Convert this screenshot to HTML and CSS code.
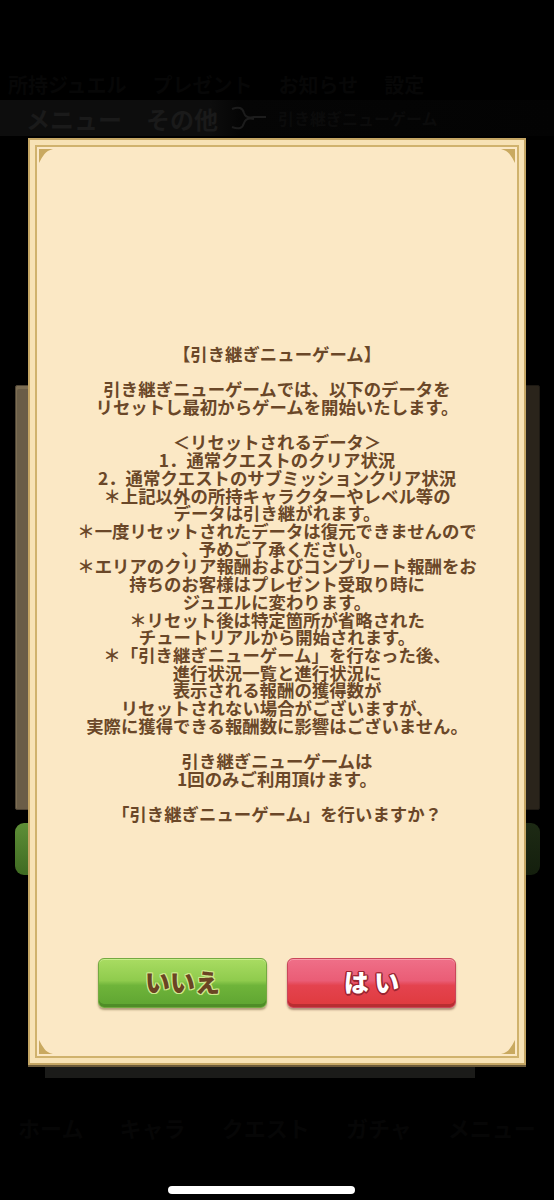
FILE: index.html
```html
<!DOCTYPE html>
<html lang="ja">
<head>
<meta charset="utf-8">
<title>引き継ぎニューゲーム</title>
<link rel="stylesheet" href="styles.css">
</head>
<body>
<div class="screen">
  <!-- dimmed game screen behind the modal -->
  <div class="backdrop">
    <div class="bg-row">
      <span>所持ジュエル</span><span>プレゼント</span><span>お知らせ</span><span>設定</span>
    </div>
    <div class="bg-header">
      <span class="bg-title">メニュー　その他</span>
      <svg class="bg-flourish" width="40" height="30" viewBox="0 0 40 30">
        <path d="M4 6 Q14 2 16 10 Q18 16 26 14 L38 14 M4 24 Q14 28 16 20 Q18 14 26 16" fill="none" stroke="#1c1c1c" stroke-width="2"/>
      </svg>
      <span class="bg-sub">引き継ぎニューゲーム</span>
    </div>
    <div class="bg-middle">
      <div class="bg-side"></div>
      <div class="bg-side bg-side-right"></div>
    </div>
    <div class="bg-buttons">
      <div class="bg-green"></div>
      <div class="bg-green bg-green-right"></div>
    </div>
    <div class="bg-band"></div>
    <div class="bg-lines">
      <span>ホーム</span><span>キャラ</span><span>クエスト</span><span>ガチャ</span><span>メニュー</span>
    </div>
    <div class="home-bar"></div>
  </div>

  <!-- confirmation modal -->
  <div class="dialog">
    <svg class="corner corner-tl" width="14" height="14" viewBox="0 0 14 14"><path d="M0 0 L14 0 Q8 1.5 5.5 5 Q3 8 0 14 Z" fill="#c9a960"/></svg>
    <svg class="corner corner-tr" width="14" height="14" viewBox="0 0 14 14"><path d="M0 0 L14 0 Q8 1.5 5.5 5 Q3 8 0 14 Z" fill="#c9a960"/></svg>
    <svg class="corner corner-bl" width="14" height="14" viewBox="0 0 14 14"><path d="M0 0 L14 0 Q8 1.5 5.5 5 Q3 8 0 14 Z" fill="#c9a960"/></svg>
    <svg class="corner corner-br" width="14" height="14" viewBox="0 0 14 14"><path d="M0 0 L14 0 Q8 1.5 5.5 5 Q3 8 0 14 Z" fill="#c9a960"/></svg>

    <div class="message">
      <p>【引き継ぎニューゲーム】</p>
      <p>引き継ぎニューゲームでは、以下のデータを<br>リセットし最初からゲームを開始いたします。</p>
      <p>＜リセットされるデータ＞<br>
        1．通常クエストのクリア状況<br>
        2．通常クエストのサブミッションクリア状況<br>
        ＊上記以外の所持キャラクターやレベル等の<br>
        データは引き継がれます。<br>
        ＊一度リセットされたデータは復元できませんので<br>
        、予めご了承ください。<br>
        ＊エリアのクリア報酬およびコンプリート報酬をお<br>
        持ちのお客様はプレゼント受取り時に<br>
        ジュエルに変わります。<br>
        ＊リセット後は特定箇所が省略された<br>
        チュートリアルから開始されます。<br>
        ＊「引き継ぎニューゲーム」を行なった後、<br>
        進行状況一覧と進行状況に<br>
        表示される報酬の獲得数が<br>
        リセットされない場合がございますが、<br>
        実際に獲得できる報酬数に影響はございません。</p>
      <p>引き継ぎニューゲームは<br>1回のみご利用頂けます。</p>
      <p>「引き継ぎニューゲーム」を行いますか？</p>
    </div>

    <div class="actions">
      <button class="btn btn-no" type="button">いいえ</button>
      <button class="btn btn-yes" type="button">は い</button>
    </div>
  </div>
</div>
</body>
</html>
```

FILE: styles.css
```css
* {
  box-sizing: border-box;
}

html,
body {
  margin: 0;
  padding: 0;
  background: #000;
}

.screen {
  position: relative;
  width: 554px;
  height: 1200px;
  overflow: hidden;
  background: #000;
  font-family: "Noto Sans CJK JP", "Noto Sans", sans-serif;
}

/* ---------- dimmed background screen ---------- */
.backdrop {
  display: flex;
  flex-direction: column;
  height: 1200px;
}

.bg-row {
  margin-top: 68px;
  height: 32px;
  display: flex;
  gap: 26px;
  padding-left: 8px;
  align-items: center;
  font-size: 20px;
  font-weight: 700;
  color: #070707;
  white-space: nowrap;
}

.bg-header {
  height: 36px;
  display: flex;
  align-items: center;
  padding-left: 26px;
  gap: 10px;
  background: linear-gradient(to right, #0d0d0d 0, #0d0d0d 210px, #050505 240px, #030303 100%);
  white-space: nowrap;
}

.bg-title {
  font-size: 24px;
  font-weight: 700;
  color: #1a1a1a;
}

.bg-flourish {
  flex: none;
}

.bg-sub {
  font-size: 16px;
  font-weight: 700;
  color: #0b0b0b;
}

.bg-middle {
  margin-top: 249px;
  height: 425px;
  display: flex;
  justify-content: space-between;
  padding: 0 14px 0 15px;
}

.bg-side {
  width: 20px;
  height: 100%;
  background: #6a5d47;
  border: 1px solid #4e4434;
  border-radius: 2px;
  box-shadow: inset 2px 4px 0 -1px #7c6d53, inset -1px 0 0 #5b503d;
}

.bg-side-right {
  background: #2a241b;
  border-color: #1d1913;
  box-shadow: none;
}

.bg-buttons {
  margin-top: 13px;
  height: 52px;
  display: flex;
  justify-content: space-between;
  padding: 0 14px 0 15px;
}

.bg-green {
  width: 20px;
  height: 100%;
  border-radius: 9px 0 0 9px;
  background: linear-gradient(#5e8f37, #3f6b22);
}

.bg-green-right {
  border-radius: 0 9px 9px 0;
  background: linear-gradient(#1d2a14, #141f0d);
}

.bg-band {
  margin: 191px 79px 0 45px;
  height: 12px;
  background: #1b1b19;
}

.bg-lines {
  margin-top: 14px;
  height: 70px;
  display: flex;
  justify-content: space-around;
  align-items: center;
  font-size: 22px;
  font-weight: 700;
  color: #060606;
}

.home-bar {
  margin: 24px 0 0 168px;
  width: 187px;
  height: 8px;
  border-radius: 4px;
  background: #fff;
}

/* ---------- modal ---------- */
.dialog {
  position: absolute;
  left: 28px;
  top: 138px;
  width: 498px;
  height: 927px;
  display: flex;
  flex-direction: column;
  align-items: center;
  background: #fbe8c5;
  border: 2px solid #c5a664;
  box-shadow:
    inset 0 0 0 5px #f7e2b5,
    inset 0 0 0 7px #d0b26d,
    0 2px 0 #6b5a3a;
}

.corner {
  position: absolute;
}

.corner-tl {
  left: 9px;
  top: 9px;
}

.corner-tr {
  right: 9px;
  top: 9px;
  transform: scaleX(-1);
}

.corner-bl {
  left: 9px;
  bottom: 9px;
  transform: scaleY(-1);
}

.corner-br {
  right: 9px;
  bottom: 9px;
  transform: scale(-1, -1);
}

.message {
  margin-top: 205px;
  width: 100%;
  text-align: center;
  font-size: 17.4px;
  line-height: 17.7px;
  font-weight: 700;
  color: #6a4728;
  white-space: nowrap;
}

.message p {
  margin: 0 0 17.7px;
}

.message p:last-child {
  margin-bottom: 0;
}

.actions {
  margin-top: 135px;
  display: flex;
  gap: 20px;
}

.btn {
  width: 169px;
  height: 50px;
  padding: 0 0 3px;
  border-radius: 6px;
  font-family: "Noto Sans CJK JP", "Noto Sans", sans-serif;
  font-size: 25px;
  font-weight: 900;
  line-height: 1;
  cursor: pointer;
}

.btn-no {
  border: 1px solid #74a941;
  background: linear-gradient(#a9dc62 0%, #8fcb4d 45%, #6fb43a 55%, #5ea431 100%);
  box-shadow:
    inset 0 1px 0 #c7ee8c,
    inset 0 -3px 0 #4f8d27,
    0 2px 2px rgba(90, 70, 30, 0.45);
  color: #6b4423;
  text-shadow:
    1px 0 0 #cfe98c, -1px 0 0 #cfe98c, 0 1px 0 #cfe98c, 0 -1px 0 #cfe98c,
    1px 1px 0 #cfe98c, -1px -1px 0 #cfe98c, 1px -1px 0 #cfe98c, -1px 1px 0 #cfe98c;
}

.btn-yes {
  border: 1px solid #c9465a;
  background: linear-gradient(#ef6f88 0%, #ea5d76 45%, #e4434f 55%, #df3a3d 100%);
  box-shadow:
    inset 0 1px 0 #f79bab,
    inset 0 -3px 0 #b82d31,
    0 2px 2px rgba(90, 40, 30, 0.45);
  color: #fff;
  text-shadow:
    1.5px 0 0 #9a2430, -1.5px 0 0 #9a2430, 0 1.5px 0 #9a2430, 0 -1.5px 0 #9a2430,
    1px 1px 0 #9a2430, -1px -1px 0 #9a2430, 1px -1px 0 #9a2430, -1px 1px 0 #9a2430;
}
```
